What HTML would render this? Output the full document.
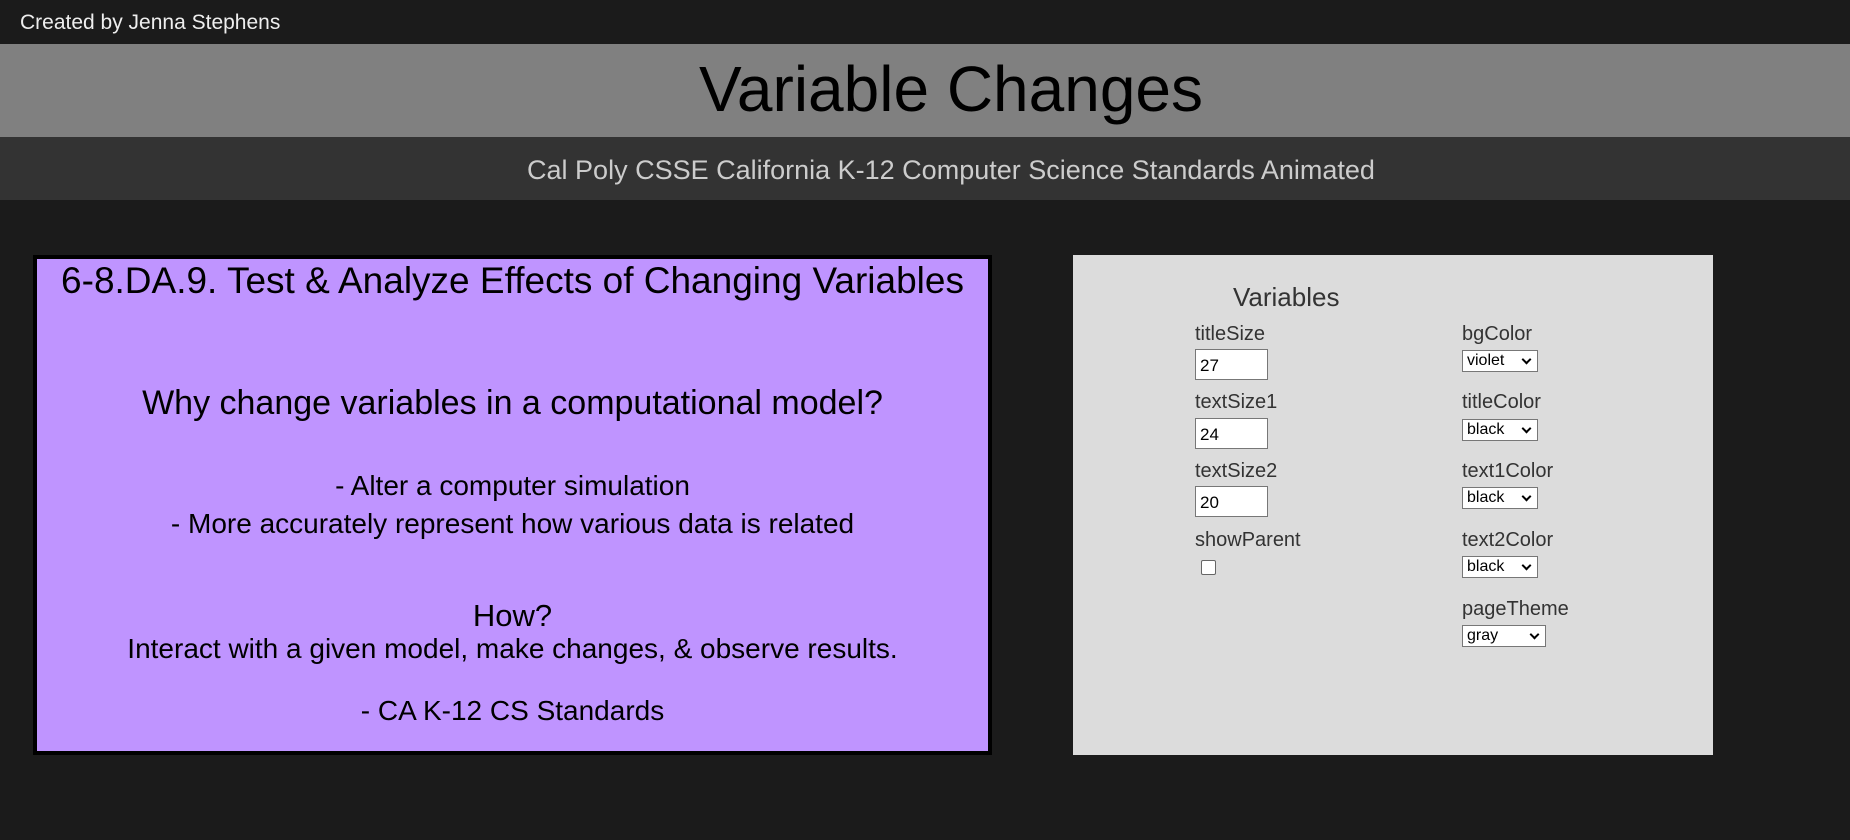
<!DOCTYPE html>
<html><head><meta charset="utf-8"><style>
*{margin:0;padding:0;box-sizing:border-box}
body{width:1850px;height:840px;background:#1b1b1b;font-family:"Liberation Sans",sans-serif;position:relative;overflow:hidden}
.a{position:absolute;white-space:nowrap;line-height:1}
.c{left:0;right:0;text-align:center}
.h{left:0;width:1902px;text-align:center}
.lab{position:absolute;font-size:20px;color:#333;line-height:1}
.inp{position:absolute;width:73px;height:31px;background:#fff;border:1px solid #777;font-size:17px;padding:6px 4px;color:#000}
.sel{position:absolute;width:76px;height:22px;background:#fff;border:1px solid #777;font-size:16px;padding:2px 4px;color:#000;line-height:16px}
.sel:after{content:"";position:absolute;right:7px;top:5px;width:5px;height:5px;border-right:2px solid #000;border-bottom:2px solid #000;transform:rotate(45deg)}
</style></head><body>
<div class="a" style="left:20px;top:12px;font-size:21px;color:#eee">Created by Jenna Stephens</div>
<div style="position:absolute;left:0;top:44px;width:1850px;height:93px;background:#808080"></div>
<div class="a h" style="top:57px;font-size:64px;color:#000">Variable Changes</div>
<div style="position:absolute;left:0;top:137px;width:1850px;height:63px;background:#333"></div>
<div class="a h" style="top:157px;font-size:27px;color:#ccc">Cal Poly CSSE California K-12 Computer Science Standards Animated</div>

<div style="position:absolute;left:33px;top:255px;width:959px;height:500px;background:#bf94ff;border:4px solid #000">
<div class="a c" style="top:3px;font-size:37px;color:#000">6-8.DA.9. Test &amp; Analyze Effects of Changing Variables</div>
<div class="a c" style="top:127px;font-size:34px;color:#000">Why change variables in a computational model?</div>
<div class="a c" style="top:213px;font-size:28px;color:#000">- Alter a computer simulation</div>
<div class="a c" style="top:251px;font-size:28px;color:#000">- More accurately represent how various data is related</div>
<div class="a c" style="top:341px;font-size:31px;color:#000">How?</div>
<div class="a c" style="top:376px;font-size:28px;color:#000">Interact with a given model, make changes, &amp; observe results.</div>
<div class="a c" style="top:438px;font-size:28px;color:#000">- CA K-12 CS Standards</div>
</div>

<div style="position:absolute;left:1073px;top:255px;width:640px;height:500px;background:#dcdcdc"></div>
<div class="lab" style="left:1233px;top:284px;font-size:26px">Variables</div>
<div class="lab" style="left:1195px;top:324px">titleSize</div>
<div class="inp" style="left:1195px;top:349px">27</div>
<div class="lab" style="left:1195px;top:392px">textSize1</div>
<div class="inp" style="left:1195px;top:418px">24</div>
<div class="lab" style="left:1195px;top:461px">textSize2</div>
<div class="inp" style="left:1195px;top:486px">20</div>
<div class="lab" style="left:1195px;top:530px">showParent</div>
<div style="position:absolute;left:1201px;top:560px;width:15px;height:15px;background:#fff;border:1px solid #666;border-radius:2px"></div>

<div class="lab" style="left:1462px;top:324px">bgColor</div>
<div class="sel" style="left:1462px;top:350px">violet</div>
<div class="lab" style="left:1462px;top:392px">titleColor</div>
<div class="sel" style="left:1462px;top:419px">black</div>
<div class="lab" style="left:1462px;top:461px">text1Color</div>
<div class="sel" style="left:1462px;top:487px">black</div>
<div class="lab" style="left:1462px;top:530px">text2Color</div>
<div class="sel" style="left:1462px;top:556px">black</div>
<div class="lab" style="left:1462px;top:599px">pageTheme</div>
<div class="sel" style="left:1462px;top:625px;width:84px">gray</div>
</body></html>
